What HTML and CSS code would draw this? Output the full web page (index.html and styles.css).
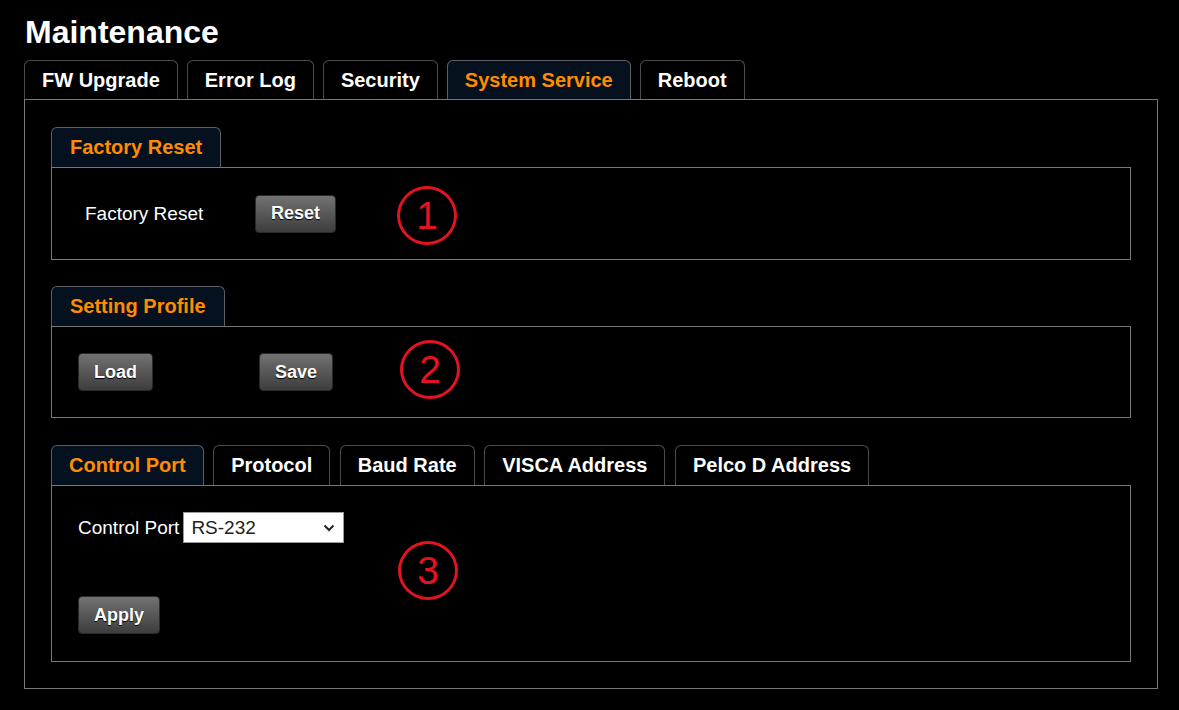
FILE: index.html
```html
<!DOCTYPE html>
<html lang="en">
  <head>
    <meta charset="UTF-8" />
    <meta name="viewport" content="width=device-width, initial-scale=1.0" />
    <title>Maintenance</title>
    <link rel="stylesheet" href="styles.css">
  </head>
  <body>
    <div class="page">
      <h1 class="title">Maintenance</h1>

      <ul class="tabs main-tabs">
        <li class="tab">FW Upgrade</li>
        <li class="tab">Error Log</li>
        <li class="tab">Security</li>
        <li class="tab active">System Service</li>
        <li class="tab">Reboot</li>
      </ul>

      <div class="panel">
        <div class="group">
          <div class="legend"><span class="tab active">Factory Reset</span></div>
          <div class="box box-reset">
            <span class="field-label">Factory Reset</span>
            <button class="btn">Reset</button>
            <span class="marker marker-1">1</span>
          </div>
        </div>

        <div class="group group-profile">
          <div class="legend"><span class="tab active">Setting Profile</span></div>
          <div class="box box-profile">
            <button class="btn">Load</button>
            <button class="btn btn-save">Save</button>
            <span class="marker marker-2">2</span>
          </div>
        </div>

        <div class="group">
          <ul class="tabs sub-tabs">
            <li class="tab active">Control Port</li>
            <li class="tab">Protocol</li>
            <li class="tab">Baud Rate</li>
            <li class="tab">VISCA Address</li>
            <li class="tab">Pelco D Address</li>
          </ul>
          <div class="box box-port">
            <div class="port-row">
              <label for="controlPort">Control Port</label>
              <div class="select-wrap">
                <select id="controlPort">
                  <option>RS-232</option>
                  <option>RS-422</option>
                </select>
                <svg class="chevron" width="12" height="8" viewBox="0 0 12 8">
                  <path d="M1.5 1.5 L6 6 L10.5 1.5" fill="none" stroke="#222" stroke-width="2" />
                </svg>
              </div>
            </div>
            <button class="btn">Apply</button>
            <span class="marker marker-3">3</span>
          </div>
        </div>
      </div>
    </div>
  </body>
</html>
```

FILE: styles.css
```css
* {
  margin: 0;
  padding: 0;
  box-sizing: border-box;
  font-family: "Liberation Sans", Arial, sans-serif;
}

body {
  background-color: #000;
  color: #fff;
}

.page {
  width: 1134px;
  margin-left: 24px;
  padding-top: 14px;
}

.title {
  font-size: 32px;
  line-height: 36px;
  font-weight: bold;
  margin-left: 1px;
  margin-bottom: 10px;
}

.tabs {
  list-style: none;
  display: flex;
  gap: 9px;
}

.sub-tabs {
  gap: 9.5px;
}

.tab {
  display: flex;
  align-items: center;
  height: 39px;
  padding: 0 17px;
  border: 1px solid #4c4c4c;
  border-bottom: none;
  border-radius: 6px 6px 0 0;
  font-size: 20px;
  font-weight: bold;
  color: #fff;
  background-color: #000;
}

.sub-tabs .tab {
  height: 40px;
}

.tab.active {
  color: #ff8c00;
  background-color: #06111f;
  border-color: #5a5f66;
}

.legend {
  display: flex;
}

.legend .tab {
  height: 40px;
  padding: 0 18px;
}

.panel {
  border: 1px solid #777;
  padding: 27px 26px 26px;
}

.group {
  margin-bottom: 26px;
}

.group-profile {
  margin-bottom: 27px;
}

.group:last-child {
  margin-bottom: 0;
}

.box {
  position: relative;
  border: 1px solid #777;
}

.box-reset {
  display: flex;
  align-items: center;
  height: 93px;
  padding-left: 33px;
}

.field-label {
  width: 170px;
  font-size: 19px;
}

.box-profile {
  display: flex;
  align-items: center;
  height: 92px;
  padding-left: 26px;
}

.btn-save {
  margin-left: 106px;
}

.box-port {
  height: 177px;
  padding: 26px 26px 0;
}

.port-row {
  display: flex;
  align-items: center;
  gap: 4px;
  margin-bottom: 53px;
}

.port-row label {
  font-size: 19px;
}

.select-wrap {
  position: relative;
}

.select-wrap select {
  appearance: none;
  width: 161px;
  height: 31px;
  padding-left: 7px;
  border: 1px solid #9a9a9a;
  background-color: #fff;
  color: #222;
  font-size: 19px;
}

.chevron {
  position: absolute;
  right: 9px;
  top: 12px;
  pointer-events: none;
}

.btn {
  height: 38px;
  padding: 0 15px;
  border: 1px solid #2a2a2a;
  border-radius: 4px;
  background: linear-gradient(#727272, #3d3d3d);
  color: #fff;
  font-size: 18px;
  font-weight: bold;
  text-shadow: 0 1px 1px #000;
  cursor: pointer;
}

.btn:hover {
  opacity: 0.9;
}

/* numbered annotation circles */
.marker {
  position: absolute;
  display: flex;
  align-items: center;
  justify-content: center;
  width: 60px;
  height: 59px;
  border: 3px solid #e3141f;
  border-radius: 50%;
  color: #e3141f;
  font-size: 39px;
  line-height: 1;
}

.marker-1 {
  left: 345px;
  top: 18px;
}

.marker-2 {
  left: 348px;
  top: 13px;
}

.marker-3 {
  left: 346px;
  top: 55px;
}
```
